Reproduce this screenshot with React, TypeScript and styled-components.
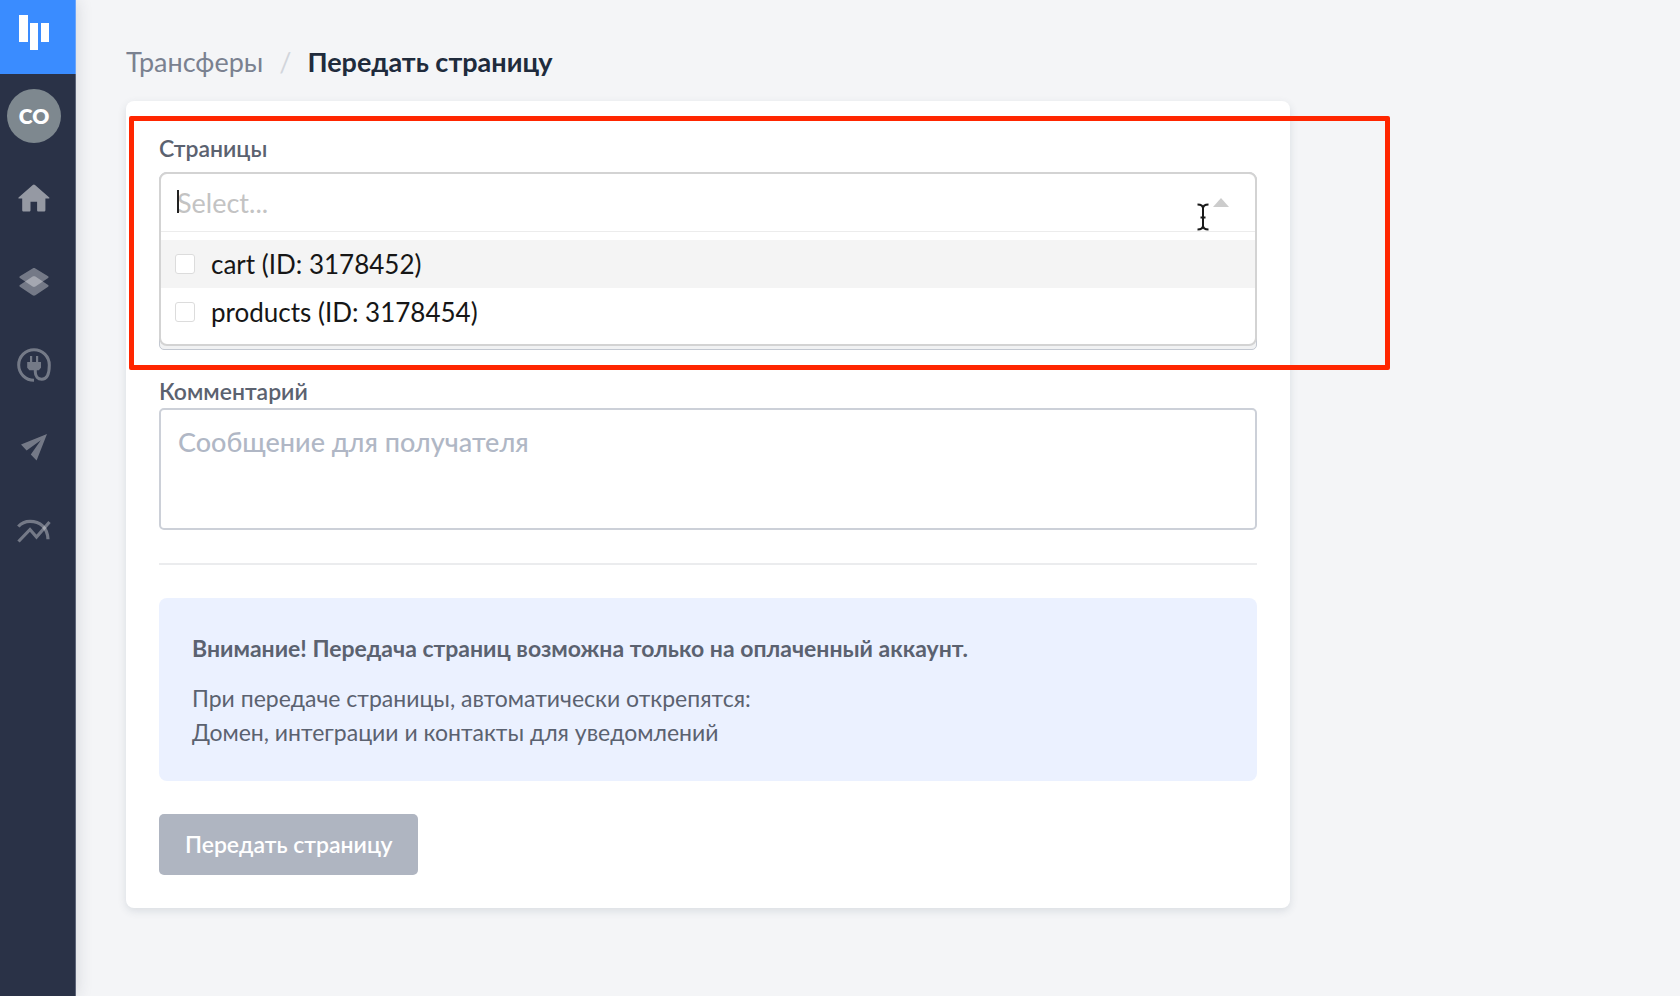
import React from "react";
import styled, { createGlobalStyle } from "styled-components";

const GlobalStyle = createGlobalStyle`
  *, *::before, *::after { box-sizing: border-box; }
  html, body { margin: 0; }
  body {
    background: #f4f5f7;
    color: #5b6270;
    font-family: Lato, "Open Sans", sans-serif;
    font-size: 23px;
  }
  input, textarea, button { font-family: inherit; }
`;

const Page = styled.div`
  display: flex;
  min-height: 100vh;
`;

const Sidebar = styled.aside`
  display: flex;
  flex-direction: column;
  flex: none;
  width: 76px;
  background: #2a3247;
  border-right: 1px solid #5d6478;
  box-shadow: 0 0 16px rgba(40, 45, 60, 0.16);
`;

const Logo = styled.a`
  height: 74px;
  padding: 14px 0 0 18px;
  margin-right: -1px;
  background: #3a8cff;
  border-right: 1px solid #6ba5fb;
`;

const Nav = styled.nav`
  display: flex;
  flex-direction: column;
  align-items: center;
  gap: 29px;
  width: 68px;
  padding-top: 15px;
`;

const Avatar = styled.button`
  width: 54px;
  height: 54px;
  padding: 0 0 2px;
  border: 0;
  border-radius: 50%;
  background: #7e888f;
  color: #fff;
  font-size: 21px;
  font-weight: 800;
`;

const NavLink = styled.a`
  display: grid;
  place-items: center;
  width: 54px;
  height: 54px;
`;

const Main = styled.main`
  flex: 1;
  min-width: 0;
  padding: 44px 50px;
`;

const Breadcrumbs = styled.nav`
  display: flex;
  align-items: center;
  gap: 16px;
  height: 36px;
  margin-bottom: 21px;
  font-size: 27px;
  line-height: 36px;
`;

const CrumbLink = styled.a`
  color: #7a8190;
  text-decoration: none;
`;

const CrumbSlash = styled.span`
  color: #d2d5dc;
`;

const CrumbCurrent = styled.h1`
  margin: 0;
  color: #202b3c;
  font-size: 27px;
  font-weight: 700;
`;

const Card = styled.form`
  position: relative;
  max-width: 1164px;
  padding: 32px 33px 33px;
  border-radius: 8px;
  background: #fff;
  box-shadow: 0 3px 8px rgba(60, 80, 100, 0.14);
`;

const FieldLabel = styled.label`
  display: block;
  height: 32px;
  color: #5b6270;
  font-size: 23px;
  font-weight: 600;
  line-height: 30px;
`;

const SelectFrame = styled.div`
  height: 178px;
  margin: 7px 0 26px;
  border: 1px solid #c3c8d1;
  border-radius: 8px 8px 5px 5px;
  background: #f1f2f3;
`;

const SelectBox = styled.div`
  margin: -1px;
  border: 2px solid #d3d3d3;
  border-radius: 8px;
  background: #fff;
  overflow: hidden;
`;

const SelectControl = styled.div`
  position: relative;
  display: flex;
  align-items: center;
  height: 58px;
  padding: 0 26px 0 16px;
  border-bottom: 1px solid #ececec;
`;

const SelectInput = styled.input`
  flex: 1;
  min-width: 0;
  padding: 0;
  border: 0;
  outline: 0;
  background: none;
  font-size: 27px;
  line-height: 36px;
  &::placeholder { color: #c3c3c3; opacity: 1; }
`;

const Caret = styled.span`
  position: absolute;
  left: 16px;
  top: 16px;
  width: 2px;
  height: 23px;
  background: #222;
`;

const Pointer = styled.svg`
  position: absolute;
  right: 45px;
  top: 29px;
`;

const OptionList = styled.ul`
  margin: 0;
  padding: 8px 0;
  list-style: none;
`;

const Option = styled.li<{ $active?: boolean }>`
  display: flex;
  align-items: center;
  gap: 16px;
  height: 48px;
  padding: 0 14px;
  background: ${(p) => (p.$active ? "#f4f4f4" : "#fff")};
  color: #161616;
  font-size: 26px;
`;

const Checkbox = styled.input`
  appearance: none;
  width: 20px;
  height: 20px;
  margin: 0;
  border: 1px solid #dcdcdc;
  border-radius: 3px;
  background: #fff;
`;

const Message = styled.textarea`
  display: block;
  width: 100%;
  height: 122px;
  padding: 14px 17px;
  border: 2px solid #ccd0d8;
  border-radius: 5px;
  outline: 0;
  resize: none;
  font-size: 27px;
  font-weight: 500;
  line-height: 36px;
  &::placeholder { color: #b0b7c5; opacity: 1; }
`;

const Divider = styled.hr`
  height: 2px;
  margin: 33px 0;
  border: 0;
  background: #ebecee;
`;

const Notice = styled.section`
  margin-bottom: 33px;
  padding: 33px 33px 32px;
  border-radius: 8px;
  background: #ebf1ff;
  font-size: 23px;
  line-height: 34px;
  p { margin: 0; }
  p:first-child { margin-bottom: 16px; font-weight: 700; }
`;

const Submit = styled.button`
  display: block;
  height: 61px;
  padding: 0 26px 2px;
  border: 0;
  border-radius: 5px;
  background: #afb5c1;
  color: #fff;
  font-size: 23px;
  font-weight: 600;
`;

const Highlight = styled.div`
  position: absolute;
  top: 15px;
  left: 3px;
  right: -100px;
  height: 254px;
  border: 5px solid #ff2600;
  border-radius: 2px;
  pointer-events: none;
`;

const tint = "#ffffff";

function HomeIcon() {
  return (
    <svg width="32" height="30" viewBox="0 0 32 30" fill={tint} fillOpacity="0.5">
      <path d="M14.8 1 .8 13.2c-.8.8-.5 1.400.5 1.400h2.900V26c0 1 .6 1.600 1.600 1.600h5.400c.8 0 1.300-.5 1.300-1.400v-8.400h6.600v8.400c0 .9.5 1.400 1.300 1.400h5.400c1 0 1.600-.6 1.600-1.600V14.600h3.100c1 0 1.300-.6.5-1.400L17 1c-.8-.7-1.400-.7-2.200 0Z" />
    </svg>
  );
}

function LayersIcon() {
  return (
    <svg width="30" height="30" viewBox="0 0 30 30" fill={tint} fillOpacity="0.35">
      <path d="M13.6 1.4.9 9.3c-.7.5-.7 1.1 0 1.6l12.7 8.6c1 .6 1.8.6 2.8 0l12.7-8.6c.7-.5.7-1.1 0-1.6L16.4 1.4c-1-.6-1.8-.6-2.8 0Z" />
      <path d="M13.6 9.6.9 18.1c-.7.5-.7 1.1 0 1.6l12.7 8.6c1 .6 1.8.6 2.8 0l12.7-8.6c.7-.5.7-1.1 0-1.6L16.4 9.6c-1-.6-1.8-.6-2.8 0Z" />
    </svg>
  );
}

function PlugIcon() {
  return (
    <svg width="34" height="34" viewBox="0 0 34 34" fill="none" opacity="0.35">
      <path
        d="M17 32.300A15.300 15.300 0 1 1 32.300 17c0 8-1.500 14.200-7.500 14.200-4 0-6.500-3-6.500-7.200V20"
        stroke={tint}
        strokeWidth="3"
      />
      <path d="M13 8h2.200v6H19V8h2.200v6h2.800v5.800l-2.200 2.400h-9.400l-2.200-2.400V14H13Z" fill={tint} />
    </svg>
  );
}

function PlaneIcon() {
  return (
    <svg width="28" height="30" viewBox="0 0 28 30" fill={tint} fillOpacity="0.35">
      <path d="M27 1 1 11.500 6.600 17.500 20.800 7.200 10.800 21.500 16.600 27.500Z" />
    </svg>
  );
}

function ChartIcon() {
  return (
    <svg width="34" height="24" viewBox="0 0 34 24" fill="none" stroke={tint} strokeOpacity="0.35" strokeWidth="3.200">
      <path d="M1.300 7.500C5 3.300 8.500 2.300 13 2.300c10 0 17.500 6 18 18" />
      <path d="M1.500 22.500 13 10.500l6.500 7.500L32.500 3" />
    </svg>
  );
}

const sections = [
  { name: "Главная", Icon: HomeIcon },
  { name: "Страницы", Icon: LayersIcon },
  { name: "Интеграции", Icon: PlugIcon },
  { name: "Рассылки", Icon: PlaneIcon },
  { name: "Аналитика", Icon: ChartIcon },
];

const pages = [
  { id: 3178452, name: "cart" },
  { id: 3178454, name: "products" },
];

export default function App() {
  return (
    <Page>
      <GlobalStyle />
      <Sidebar>
        <Logo href="#" aria-label="LP">
          <svg width="32" height="37" viewBox="0 0 32 37" fill="#fff">
            <path d="M1 1h9v27H1zM12 9h8v27h-8zM23 9h8v19h-8z" />
          </svg>
        </Logo>
        <Nav>
          <Avatar type="button">CO</Avatar>
          {sections.map(({ name, Icon }) => (
            <NavLink key={name} href="#" aria-label={name}>
              <Icon />
            </NavLink>
          ))}
        </Nav>
      </Sidebar>
      <Main>
        <Breadcrumbs>
          <CrumbLink href="#">Трансферы</CrumbLink>
          <CrumbSlash>/</CrumbSlash>
          <CrumbCurrent>Передать страницу</CrumbCurrent>
        </Breadcrumbs>
        <Card onSubmit={(e) => e.preventDefault()}>
          <FieldLabel htmlFor="pages">Страницы</FieldLabel>
          <SelectFrame>
            <SelectBox>
              <SelectControl>
                <SelectInput id="pages" placeholder="Select..." autoComplete="off" />
                <Caret />
                <svg width="16" height="9" viewBox="0 0 16 9" fill="#ccc">
                  <path d="M8 0 16 9H0Z" />
                </svg>
                <Pointer width="14" height="28" viewBox="0 0 14 28" fill="none" stroke="#fff" strokeWidth="4">
                  <path d="M1.500 1.500C5 1.500 7 3 7 5.500v17c0 2.500-2 4-5.500 4M12.500 1.500C9 1.500 7 3 7 5.500M12.500 26.500C9 26.500 7 25 7 22.500M4.500 14.500h5" />
                  <path
                    d="M1.500 1.500C5 1.500 7 3 7 5.500v17c0 2.500-2 4-5.500 4M12.500 1.500C9 1.500 7 3 7 5.500M12.500 26.500C9 26.500 7 25 7 22.500M4.500 14.500h5"
                    stroke="#1a1a1a"
                    strokeWidth="2"
                  />
                </Pointer>
              </SelectControl>
              <OptionList>
                {pages.map((page, index) => (
                  <Option key={page.id} $active={index === 0}>
                    <Checkbox type="checkbox" id={`page-${page.id}`} />
                    <label htmlFor={`page-${page.id}`}>
                      {page.name} (ID: {page.id})
                    </label>
                  </Option>
                ))}
              </OptionList>
            </SelectBox>
          </SelectFrame>
          <FieldLabel htmlFor="message">Комментарий</FieldLabel>
          <Message id="message" placeholder="Сообщение для получателя" />
          <Divider />
          <Notice>
            <p>Внимание! Передача страниц возможна только на оплаченный аккаунт.</p>
            <p>
              При передаче страницы, автоматически открепятся:
              <br />
              Домен, интеграции и контакты для уведомлений
            </p>
          </Notice>
          <Submit type="submit">Передать страницу</Submit>
          <Highlight />
        </Card>
      </Main>
    </Page>
  );
}
